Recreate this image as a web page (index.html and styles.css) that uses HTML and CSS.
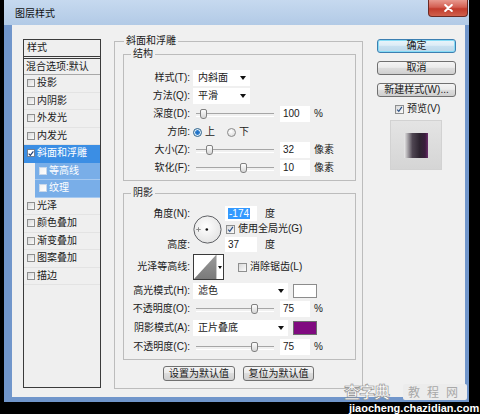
FILE: index.html
```html
<!DOCTYPE html>
<html lang="zh-CN">
<head>
<meta charset="utf-8">
<title>图层样式</title>
<link rel="stylesheet" href="styles.css">
</head>
<body>
<div class="window">
  <div class="titlebar">
    <span class="title">图层样式</span>
    <span class="close"><svg width="9" height="8" viewBox="0 0 9 8"><path d="M1.2 1 L7.8 7 M7.8 1 L1.2 7" stroke="#fff" stroke-width="2" stroke-linecap="round"/></svg></span>
  </div>
  <div class="frame">
    <div class="client">
      <div class="list">
        <div class="list-head">样式</div>
        <div class="list-blend">混合选项:默认</div>
        <div class="item"><span class="cb"></span>投影</div>
        <div class="item"><span class="cb"></span>内阴影</div>
        <div class="item"><span class="cb"></span>外发光</div>
        <div class="item"><span class="cb"></span>内发光</div>
        <div class="item sel"><span class="cb on"><svg width="7" height="7" viewBox="0 0 7 7"><path d="M0.8 3.6 L2.7 5.6 L6.3 0.9" fill="none" stroke="#1d3f77" stroke-width="1.4"/></svg></span>斜面和浮雕</div>
        <div class="item sub"><span class="cb white"></span>等高线</div>
        <div class="item sub"><span class="cb white"></span>纹理</div>
        <div class="item"><span class="cb"></span>光泽</div>
        <div class="item"><span class="cb"></span>颜色叠加</div>
        <div class="item"><span class="cb"></span>渐变叠加</div>
        <div class="item"><span class="cb"></span>图案叠加</div>
        <div class="item"><span class="cb"></span>描边</div>
      </div>

      <fieldset class="outer">
        <legend class="lg-outer">斜面和浮雕</legend>
        <div class="outer-body">
          <fieldset class="group">
            <legend class="lg-inner">结构</legend>
            <div class="g1">
              <div class="row">
                <span class="lbl">样式(T):</span>
                <span class="drop w57">内斜面<span class="arr"></span></span>
              </div>
              <div class="row">
                <span class="lbl">方法(Q):</span>
                <span class="drop w57">平滑<span class="arr"></span></span>
              </div>
              <div class="row">
                <span class="lbl">深度(D):</span>
                <span class="slider"><span class="thumb" style="left:10px"></span></span>
                <span class="num">100</span>
                <span class="unit">%</span>
              </div>
              <div class="row">
                <span class="lbl">方向:</span>
                <span class="radio on"></span><span class="rtxt">上</span>
                <span class="radio gap"></span><span class="rtxt">下</span>
              </div>
              <div class="row">
                <span class="lbl">大小(Z):</span>
                <span class="slider"><span class="thumb" style="left:16px"></span></span>
                <span class="num">32</span>
                <span class="unit">像素</span>
              </div>
              <div class="row">
                <span class="lbl">软化(F):</span>
                <span class="slider"><span class="thumb" style="left:50px"></span></span>
                <span class="num">10</span>
                <span class="unit">像素</span>
              </div>
            </div>
          </fieldset>

          <fieldset class="group g-shadow">
            <legend class="lg-inner">阴影</legend>
            <div class="g2">
              <div class="angle">
                <div class="angle-labels">
                  <span class="al">角度(N):</span>
                  <span class="al-gap"></span>
                  <span class="al">高度:</span>
                </div>
                <svg class="dial" width="29" height="29" viewBox="0 0 29 29">
                  <defs>
                    <radialGradient id="dg" cx="45%" cy="40%" r="60%">
                      <stop offset="0" stop-color="#ffffff"/>
                      <stop offset="1" stop-color="#e4e4e4"/>
                    </radialGradient>
                  </defs>
                  <circle cx="14.5" cy="14.5" r="13.6" fill="url(#dg)" stroke="#5f6165" stroke-width="1"/>
                  <path d="M5.5 12.3 V16.7 M3.3 14.5 H7.7" stroke="#8a8a8a" stroke-width="1"/>
                  <circle cx="13.8" cy="14.5" r="1.3" fill="#111"/>
                </svg>
                <div class="angle-right">
                  <div class="ar-row"><span class="num n32"><span class="hl">-174</span></span><span class="deg">度</span></div>
                  <div class="ar-row ar-cb"><span class="cb"><svg width="9" height="9" viewBox="0 0 9 9"><path d="M1.5 4.6 L3.6 6.8 L7.6 1.2" fill="none" stroke="#2a4f86" stroke-width="1.5"/></svg></span><span class="cbt">使用全局光(G)</span></div>
                  <div class="ar-row"><span class="num n32">37</span><span class="deg">度</span></div>
                </div>
              </div>
              <div class="row contour-row">
                <span class="lbl">光泽等高线:</span>
                <span class="contour">
                  <svg width="22" height="24" viewBox="0 0 22 24">
                    <defs>
                      <linearGradient id="cg" x1="0" y1="0" x2="0" y2="1">
                        <stop offset="0" stop-color="#9a9a9a"/>
                        <stop offset="1" stop-color="#7a7a7a"/>
                      </linearGradient>
                    </defs>
                    <rect width="22" height="24" fill="#fff"/>
                    <polygon points="0,24 22,0 22,24" fill="url(#cg)"/>
                  </svg>
                  <span class="c-arr"><span class="arr"></span></span>
                </span>
                <span class="cb cb-aa"></span><span class="cbt">消除锯齿(L)</span>
              </div>
              <div class="row mode-row">
                <span class="lbl">高光模式(H):</span>
                <span class="drop w95">滤色<span class="arr"></span></span>
                <span class="swatch white-sw"></span>
              </div>
              <div class="row r18 op1">
                <span class="lbl">不透明度(O):</span>
                <span class="slider"><span class="thumb" style="left:61px"></span></span>
                <span class="num">75</span>
                <span class="unit">%</span>
              </div>
              <div class="row r19">
                <span class="lbl">阴影模式(A):</span>
                <span class="drop w95">正片叠底<span class="arr"></span></span>
                <span class="swatch purple-sw"></span>
              </div>
              <div class="row r19">
                <span class="lbl">不透明度(C):</span>
                <span class="slider"><span class="thumb" style="left:61px"></span></span>
                <span class="num">75</span>
                <span class="unit">%</span>
              </div>
            </div>
          </fieldset>

          <div class="btnrow">
            <span class="btn b72">设置为默认值</span>
            <span class="btn b71">复位为默认值</span>
          </div>
        </div>
      </fieldset>

      <div class="side">
        <span class="btn default">确定</span>
        <span class="btn">取消</span>
        <span class="btn">新建样式(W)...</span>
        <div class="preview-row"><span class="cb"><svg width="9" height="9" viewBox="0 0 9 9"><path d="M1.5 4.6 L3.6 6.8 L7.6 1.2" fill="none" stroke="#2a4f86" stroke-width="1.5"/></svg></span><span class="cbt">预览(V)</span></div>
        <div class="preview"><div class="preview-inner"></div></div>
      </div>
    </div>
  </div>
</div>

<div class="watermark">
  <div class="wm-top"><span class="wm-logo">查字典</span><span class="wm-name">教程网</span></div>
  <div class="wm-url">jiaocheng.chazidian.com</div>
</div>
</body>
</html>
```

FILE: styles.css
```css
* { box-sizing: border-box; }
html, body { margin: 0; padding: 0; }
body {
  width: 480px;
  height: 414px;
  overflow: hidden;
  background: #000;
  position: relative;
  font-family: "Liberation Sans", "Noto Sans CJK SC", sans-serif;
  font-size: 10px;
  line-height: 12px;
  color: #1a1a1a;
}

/* window chrome */
.window {
  margin-left: 4px;
  width: 465px;
  height: 402px;
  display: flex;
  flex-direction: column;
}
.titlebar {
  height: 25px;
  flex: none;
  display: flex;
  align-items: flex-start;
  background: linear-gradient(#c6d9ef, #b2cae6);
}
.title {
  margin: 8px 0 0 11px;
  line-height: 12px;
  color: #111;
}
.close {
  margin-left: auto;
  margin-right: 1px;
  width: 40px;
  height: 17px;
  display: flex;
  align-items: center;
  justify-content: center;
  background: linear-gradient(#e8998f, #d35f52 45%, #c23b2c 55%, #d0604c);
  border: 1px solid #6b2a24;
  border-top: 0;
  border-radius: 0 0 4px 4px;
}
.frame {
  flex: 1;
  display: flex;
  background: #7196cb;
  padding: 0 4px 5px 8px;
}
.client {
  flex: 1;
  display: flex;
  align-items: flex-start;
  background: #f0f0f0;
}

/* style list */
.list {
  margin: 14px 0 0 11px;
  width: 78px;
  height: 349px;
  flex: none;
  border: 1px solid #3b3b3b;
  background: #efefef;
}
.list-head {
  height: 19px;
  line-height: 16px;
  padding-left: 3px;
  border-bottom: 3px double #3b3b3b;
}
.list-blend {
  height: 16px;
  line-height: 15px;
  padding-left: 2px;
  border-bottom: 1px solid #a8a8a8;
}
.item {
  height: 17.5px;
  display: flex;
  align-items: center;
  padding-left: 3px;
  border-bottom: 1px solid #e3e3e3;
}
.item .cb { width: 8px; height: 8px; margin-right: 2px; }
.item.sel { background: #3b8ee4; color: #fff; border-bottom-color: #3b8ee4; }
.item.sub {
  margin-left: 11px;
  padding-left: 4px;
  background: #79aee8;
  color: #fff;
  border-bottom: 1px solid #a6c9f0;
}
.cb {
  width: 9px;
  height: 9px;
  flex: none;
  border: 1px solid #8e8f8f;
  background: linear-gradient(135deg, #d9d9d9, #fbfbfb);
  display: flex;
  align-items: center;
  justify-content: center;
}
.cb.on { background: #fff; border-color: #6f7f95; }
.cb.white { background: linear-gradient(135deg, #f2f2f2, #ffffff); border-color: #c9d8ea; }

/* fieldsets */
fieldset {
  margin: 0;
  padding: 0;
  min-width: 0;
  border: 1px solid #bcbcbc;
}
legend {
  padding: 0 2px;
  line-height: 12px;
}
.outer {
  margin: 10px 0 0 13px;
  width: 249px;
  flex: none;
}
.lg-outer { margin-left: 9px; }
.lg-inner { margin-left: 7px; }
.outer-body { padding: 0 6px 7px 8px; }
.group { margin-top: 1px; }
.g-shadow { margin-top: 6px; }
.g1 { padding: 9px 0 3px; }
.g2 { padding: 7px 0 3px; }

.row {
  display: flex;
  align-items: center;
  height: 18px;
}
.r18 { height: 18px; }
.r19 { height: 19px; }
.op1 { margin-top: 1px; }
.lbl {
  width: 66px;
  flex: none;
  text-align: right;
  white-space: nowrap;
}
.drop {
  margin-left: 3px;
  height: 16px;
  flex: none;
  display: flex;
  align-items: center;
  padding: 0 4px 0 5px;
  background: #fff;
}
.w57 { width: 57px; }
.w95 { width: 95px; }
.arr {
  margin-left: auto;
  width: 0;
  height: 0;
  border-left: 3px solid transparent;
  border-right: 3px solid transparent;
  border-top: 4px solid #111;
}
.slider {
  margin-left: 3px;
  width: 84px;
  height: 12px;
  flex: none;
  position: relative;
}
.slider::before {
  content: "";
  position: absolute;
  left: 3px;
  right: 3px;
  top: 5px;
  height: 2px;
  border-top: 1px solid #a6a6a6;
  border-bottom: 1px solid #ffffff;
}
.thumb {
  position: absolute;
  top: 1px;
  width: 7px;
  height: 10px;
  margin-left: -3px;
  border: 1px solid #808080;
  border-radius: 2px 2px 3px 3px;
  background: linear-gradient(#fdfdfd, #d6d6d6);
}
.num {
  margin-left: 3px;
  width: 30px;
  height: 16px;
  flex: none;
  padding-left: 3px;
  line-height: 16px;
  background: #fff;
}
.unit { margin-left: 4px; }
.radio {
  width: 9px;
  height: 9px;
  flex: none;
  margin-left: 3px;
  border-radius: 50%;
  border: 1px solid #8a8a8a;
  background: radial-gradient(circle at 40% 35%, #ffffff, #d5d5d5);
}
.radio.on {
  border-color: #2c628b;
  background: radial-gradient(circle, #1f6cc0 0, #2f7fd0 2px, #d8e9f7 2.6px, #eef5fb 100%);
}
.radio.gap { margin-left: 12px; }
.rtxt { margin-left: 3px; }

/* angle block */
.angle { display: flex; align-items: flex-start; }
.angle-labels {
  width: 66px;
  flex: none;
  display: flex;
  flex-direction: column;
  text-align: right;
}
.al { height: 15px; line-height: 15px; }
.al-gap { height: 16px; }
.dial { margin: 9px 0 0 3px; flex: none; display: block; }
.angle-right { margin-left: 3px; display: flex; flex-direction: column; }
.ar-row { display: flex; align-items: center; height: 15px; }
.ar-row.ar-cb { height: 16px; padding-left: 1px; }
.num.n32 { width: 32px; height: 15px; line-height: 15px; margin-left: 0; }
.hl { background: #3399ff; color: #fff; padding: 0 1px; }
.deg { margin-left: 8px; }
.cbt { margin-left: 3px; white-space: nowrap; }

.contour-row { height: 26px; margin-top: 2px; }
.contour {
  margin-left: 3px;
  width: 31px;
  height: 26px;
  flex: none;
  display: flex;
  border: 1px solid #3a3a3a;
  background: #fff;
}
.contour svg { display: block; }
.c-arr {
  width: 7px;
  border-left: 1px solid #c8c8c8;
  display: flex;
  align-items: center;
  justify-content: center;
}
.c-arr .arr { margin: 0; border-left-width: 2.5px; border-right-width: 2.5px; border-top-width: 3px; }
.cb-aa { margin-left: 14px; }

.mode-row { height: 16px; margin-top: 3px; }
.swatch {
  margin-left: 5px;
  width: 24px;
  height: 14px;
  flex: none;
  border: 1px solid #8c8c8c;
}
.white-sw { background: #fff; }
.purple-sw { background: #800a80; border-color: #6d6d6d; }

/* buttons */
.btn {
  display: flex;
  align-items: center;
  justify-content: center;
  height: 15px;
  line-height: 12px;
  white-space: nowrap;
  border: 1px solid #707070;
  border-radius: 3px;
  background: linear-gradient(#f4f4f4, #ebebeb 45%, #dddddd 50%, #cfcfcf);
}
.btnrow {
  display: flex;
  margin: 6px 0 0 40px;
}
.b72 { width: 72px; }
.b71 { width: 71px; margin-left: 8px; }

.side {
  margin: 14px 0 0 14px;
  width: 79px;
  flex: none;
  display: flex;
  flex-direction: column;
}
.side .btn { height: 14px; }
.side .btn + .btn { margin-top: 8px; }
.btn.default {
  border-color: #3c7fb1;
  box-shadow: inset 0 0 0 1px #86dcf6;
  background: linear-gradient(#eaf5fb, #dcecf6 45%, #c8e0f0 50%, #bcd8ea);
}
.preview-row {
  margin-top: 6px;
  height: 12px;
  display: flex;
  align-items: center;
  padding-left: 18px;
}
.preview {
  margin: 5px 0 0 13px;
  width: 52px;
  height: 50px;
  padding: 12px 0 0 13px;
  border: 1px solid #d2d2d2;
  background: linear-gradient(#e4e4e4, #d5d5d5);
}
.preview-inner {
  width: 24px;
  height: 25px;
  background: linear-gradient(90deg, #ececec 0%, #a9a6aa 15%, #4f4652 35%, #2e2531 65%, #3a1d3d 88%, #6a2c6a 100%);
}

/* watermark overlay */
.watermark {
  position: absolute;
  left: 344px;
  top: 383px;
  width: 126px;
}
.wm-top { display: flex; align-items: center; height: 17px; }
.wm-logo {
  width: 58px;
  font-size: 16px;
  line-height: 17px;
  font-weight: bold;
  color: #fff;
  -webkit-text-stroke: 0.6px #8a8a8a;
  letter-spacing: -1px;
  font-family: "Noto Sans CJK SC", sans-serif;
}
.wm-name {
  margin-left: 1px;
  height: 16px;
  padding: 0 0 0 5px;
  width: 64px;
  background: #ececec;
  border-radius: 2px;
  color: #a8a8a8;
  font-size: 12px;
  line-height: 16px;
  letter-spacing: 7px;
  font-family: "Noto Sans CJK SC", sans-serif;
}
.wm-url {
  margin-top: 3px;
  padding-left: 5px;
  font-size: 11px;
  line-height: 10px;
  font-weight: bold;
  color: #fff;
}
```
